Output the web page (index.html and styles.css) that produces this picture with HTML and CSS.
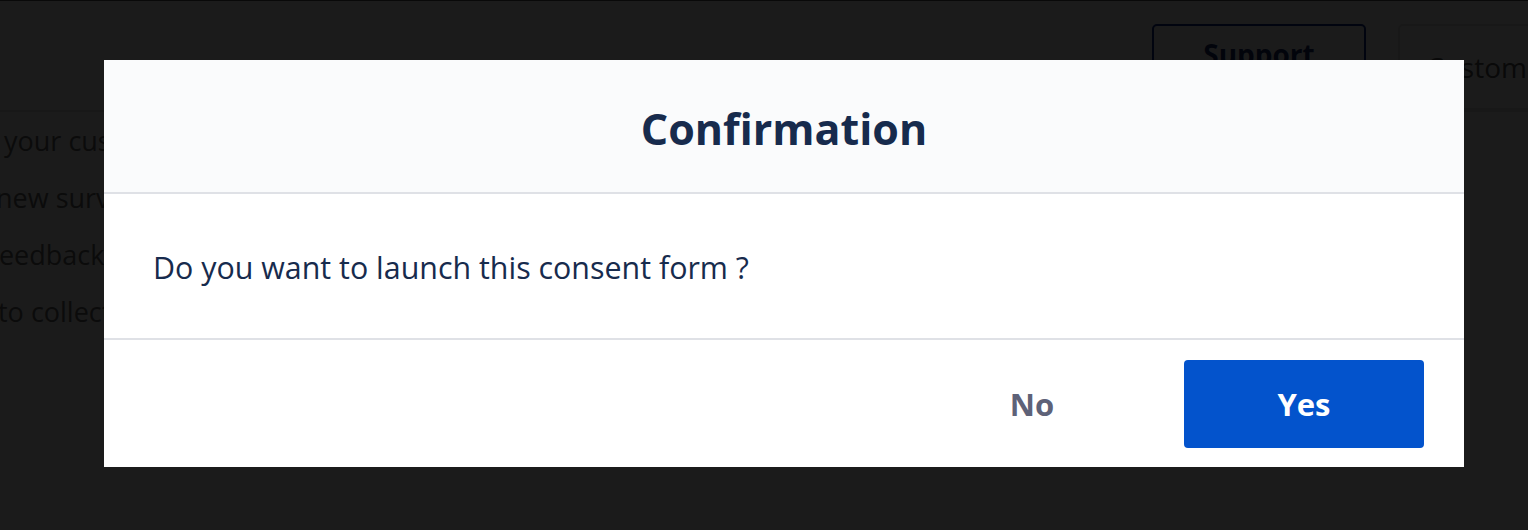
FILE: index.html
```html
<!DOCTYPE html>
<html lang="en">
<head>
<meta charset="utf-8">
<title>Confirmation</title>
<link rel="stylesheet" href="styles.css">
</head>
<body>
<div class="page">
  <header class="topbar">
    <button class="btn-support" type="button">Support</button>
    <button class="btn-customer" type="button">Customer</button>
  </header>
  <div class="intro">
    <p class="line l1">your customers</p>
    <p class="line l2">new survey</p>
    <p class="line l3">Feedback forms</p>
    <p class="line l4">to collect answers</p>
  </div>
</div>
<div class="overlay"></div>
<div class="modal" role="dialog" aria-labelledby="modal-title">
  <div class="modal-header">
    <h2 id="modal-title" class="modal-title">Confirmation</h2>
  </div>
  <div class="modal-body">
    <p class="modal-text">Do you want to launch this consent form ?</p>
  </div>
  <div class="modal-footer">
    <button class="btn btn-no" type="button">No</button>
    <button class="btn btn-yes" type="button">Yes</button>
  </div>
</div>
</body>
</html>
```
FILE: styles.css
```css
html, body {
  margin: 0;
  padding: 0;
  height: 100%;
}
body {
  background: #ffffff;
  font-family: "Open Sans", "Noto Sans", sans-serif;
  overflow: hidden;
  border-top: 1px solid #555;
  box-sizing: border-box;
}
.page {
  color: #6b6b6b;
}
.topbar {
  display: flex;
  justify-content: flex-end;
  gap: 32px;
  padding: 23px 0 0 0;
  margin-right: -200px;
  height: 86px;
  border-bottom: 2px solid #e0e0e0;
}
.btn-support {
  width: 214px;
  height: 60px;
  border: 2px solid #0a2a8a;
  border-radius: 5px;
  background: #fff;
  color: #172b6d;
  font-family: inherit;
  font-weight: 700;
  font-size: 28px;
}
.btn-customer {
  width: 330px;
  height: 86px;
  border: 2px solid #dddddd;
  border-radius: 5px;
  background: #fff;
  color: #555;
  font-family: inherit;
  font-size: 28px;
  text-align: left;
  padding-left: 26px;
}
.intro {
  padding-top: 0;
}
.line {
  margin: 0;
  font-size: 27px;
  line-height: 57px;
  white-space: nowrap;
}
.l1 { margin-left: 4px; }
.l2 { margin-left: -4px; }
.l3 { margin-left: -15px; }
.l4 { margin-left: -2px; }
.overlay {
  position: fixed;
  inset: 0;
  background: rgba(0, 0, 0, 0.894);
}
.modal {
  position: absolute;
  left: 104px;
  top: 60px;
  width: 1360px;
  background: #ffffff;
  display: flex;
  flex-direction: column;
}
.modal-header {
  background: #fafbfc;
  height: 132px;
  border-bottom: 2px solid #dfe1e6;
  display: flex;
  align-items: center;
  justify-content: center;
}
.modal-title {
  margin: 0;
  font-size: 43px;
  font-weight: 700;
  color: #172b4d;
  padding-top: 4px;
}
.modal-body {
  height: 144px;
  border-bottom: 2px solid #dfe1e6;
  display: flex;
  align-items: center;
  padding: 0 49px;
}
.modal-text {
  margin: 0;
  font-size: 30.4px;
  color: #172b4d;
  padding-top: 2px;
}
.modal-footer {
  display: flex;
  justify-content: flex-end;
  gap: 32px;
  padding: 20px 40px 19px;
}
.btn {
  width: 240px;
  height: 88px;
  border: none;
  border-radius: 4px;
  font-family: inherit;
  font-weight: 700;
  font-size: 31px;
  cursor: pointer;
}
.btn-no {
  background: transparent;
  color: #5e6278;
}
.btn-yes {
  background: #0353cc;
  color: #ffffff;
}
```
